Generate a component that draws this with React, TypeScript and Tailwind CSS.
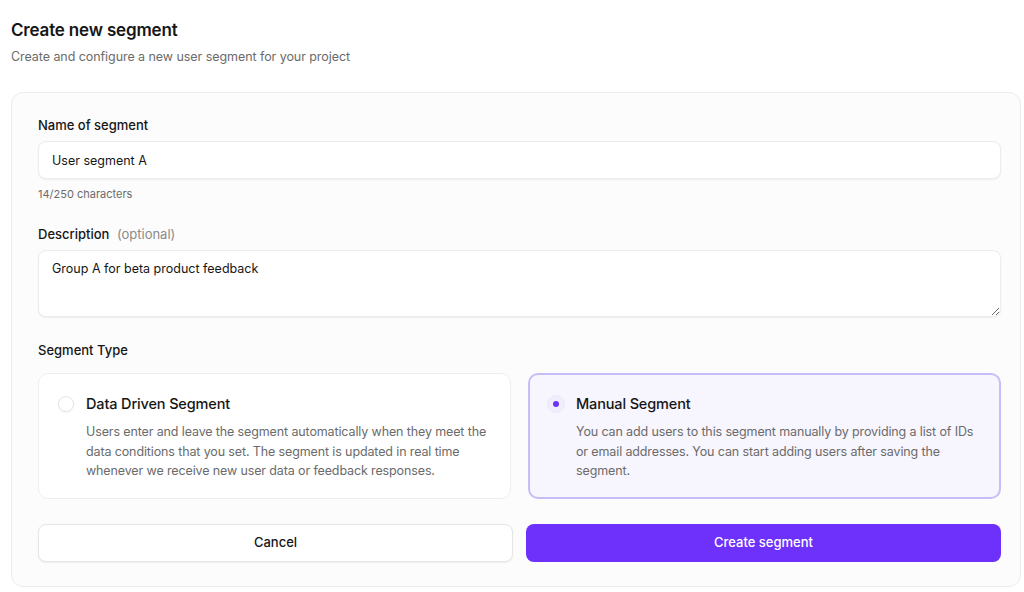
import { useState } from 'react';

const App = () => {
  const [name, setName] = useState('User segment A');
  const [description, setDescription] = useState('Group A for beta product feedback');
  const [type, setType] = useState<'data' | 'manual'>('manual');

  const options = [
    {
      id: 'data' as const,
      title: 'Data Driven Segment',
      text: 'Users enter and leave the segment automatically when they meet the data conditions that you set. The segment is updated in real time whenever we receive new user data or feedback responses.',
    },
    {
      id: 'manual' as const,
      title: 'Manual Segment',
      text: 'You can add users to this segment manually by providing a list of IDs or email addresses. You can start adding users after saving the segment.',
    },
  ];

  return (
    <div className="min-h-[592px] bg-white font-['Inter',sans-serif] text-[#161616]">
      <div className="px-[11px] pt-[18px]">
        <h1 className="text-[17px] font-semibold leading-6 tracking-[-0.01em]">Create new segment</h1>
        <p className="mt-[5px] text-[12.5px] leading-5 tracking-[-0.005em] text-[#6b6b6b]">
          Create and configure a new user segment for your project
        </p>
      </div>

      {/* Form card */}
      <div className="mt-[25px] ml-[11px] mr-[3px] rounded-[12px] border border-[#ececec] bg-[#fcfcfc] pl-[26px] pr-[19px] pt-[22px] pb-[24px]">
        <label className="block text-[13px] font-medium leading-5">Name of segment</label>
        <input
          value={name}
          onChange={(e) => setName(e.target.value)}
          className="mt-[6px] block h-[38px] w-full rounded-[8px] border border-[#ececec] bg-white px-[13px] text-[12.5px] shadow-[0_1px_2px_rgba(0,0,0,0.06)] outline-none"
        />
        <p className="mt-[5px] text-[11px] leading-5 text-[#6b6b6b]">{name.length}/250 characters</p>

        <label className="mt-[20px] block text-[13px] font-medium leading-5">
          Description <span className="ml-1 font-normal text-[#8a8a8a]">(optional)</span>
        </label>
        <textarea
          value={description}
          onChange={(e) => setDescription(e.target.value)}
          className="mt-[6px] block h-[67px] w-full rounded-[8px] border border-[#ececec] bg-white px-[13px] py-[8px] text-[12.5px] leading-5 shadow-[0_1px_2px_rgba(0,0,0,0.06)] outline-none"
        />

        <p className="mt-[23px] text-[13px] font-medium leading-5">Segment Type</p>

        <div className="mt-[13px] grid grid-cols-2 gap-[17px]">
          {options.map((o) => {
            const active = type === o.id;
            return (
              <button
                key={o.id}
                onClick={() => setType(o.id)}
                className={
                  active
                    ? 'flex h-[126px] items-start gap-[12px] rounded-[10px] border-2 border-[#c9bdf7] bg-[#f7f5fe] pl-[18px] pr-[16px] pt-[18px] text-left'
                    : 'flex h-[126px] items-start gap-[12px] rounded-[10px] border border-[#eeeeee] bg-white pl-[19px] pr-[16px] pt-[19px] text-left'
                }
              >
                <span
                  className={
                    active
                      ? 'mt-[3px] flex h-[16px] w-[16px] shrink-0 items-center justify-center rounded-full bg-[#f1edfd] shadow-[0_0_0_1px_#ece7fb]'
                      : 'mt-[3px] flex h-[16px] w-[16px] shrink-0 items-center justify-center rounded-full border border-[#e6e6e6] bg-white shadow-[0_1px_2px_rgba(0,0,0,0.05)]'
                  }
                >
                  {active && <span className="h-[6px] w-[6px] rounded-full bg-[#6a35f0]" />}
                </span>
                <span className="block">
                  <span className="block text-[14.5px] font-medium leading-[22px] tracking-[-0.01em] text-[#161616]">{o.title}</span>
                  <span className="mt-[7px] block text-[12.5px] leading-[19.5px] tracking-[-0.01em] text-[#6b6b6b]">{o.text}</span>
                </span>
              </button>
            );
          })}
        </div>

        <div className="mt-[25px] grid grid-cols-2 gap-[13px]">
          <button className="h-[38px] rounded-[8px] border border-[#e6e6e6] bg-white text-[13px] font-medium text-[#161616] shadow-[0_1px_2px_rgba(0,0,0,0.06)]">
            Cancel
          </button>
          <button className="h-[38px] rounded-[8px] bg-[#6d31fb] text-[13px] font-medium text-white">
            Create segment
          </button>
        </div>
      </div>
    </div>
  );
};

export default App;
